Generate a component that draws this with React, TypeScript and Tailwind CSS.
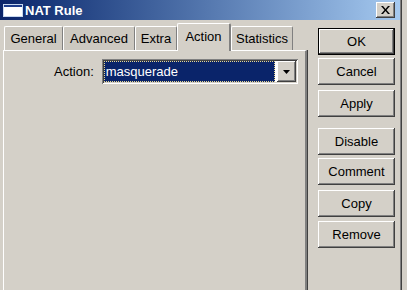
import { ReactNode } from 'react';

// classic 3D bevels
const RAISED =
  'shadow-[inset_-1px_-1px_#404040,inset_1px_1px_#ffffff,inset_-2px_-2px_#808080,inset_2px_2px_#d4d0c8]';
const SUNKEN =
  'shadow-[inset_1px_1px_#808080,inset_-1px_-1px_#ffffff,inset_2px_2px_#404040,inset_-2px_-2px_#d4d0c8]';

const TABS = [
  { name: 'General', w: 'w-[59px]' },
  { name: 'Advanced', w: 'w-[72px]' },
  { name: 'Extra', w: 'w-[42px]' },
  { name: 'Action', w: 'w-[54px]', active: true },
  { name: 'Statistics', w: 'w-[62px]' },
];

function Button({ children, isDefault, className = '' }: { children: ReactNode; isDefault?: boolean; className?: string }) {
  return (
    <div
      className={`h-[27px] w-[77px] flex items-center justify-center text-[13px] text-black ${
        isDefault ? 'border border-black' : ''
      } ${className}`}
    >
      <div className={`w-full h-full flex items-center justify-center ${RAISED}`}>{children}</div>
    </div>
  );
}

export default function App() {
  return (
    <div
      className="w-[407px] h-[290px] overflow-hidden bg-[#d4d0c8] flex text-black"
      style={{ fontFamily: '"Liberation Sans", Arial, sans-serif' }}
    >
      <div className="w-[400px] flex flex-col">
        {/* Title bar */}
        <div className="h-[22px] flex items-center bg-gradient-to-r from-[#0a246a] to-[#a6caf0] pl-[4px] pr-[5px]">
          <div className="w-[18px] h-[11px] bg-white border-t-[2px] border-[#1c3c8c] shadow-[0_0_0_1px_#c8d8f0]" />
          <span className="ml-[3px] text-white font-bold text-[13px] leading-none">NAT Rule</span>
          <div
            className={`ml-auto w-[19px] h-[16px] bg-[#d4d0c8] flex items-center justify-center ${RAISED}`}
          >
            <svg width="9" height="8" viewBox="0 0 9 8">
              <path d="M0 0h2l2.5 3 2.5-3h2L5.5 4 9 8H7L4.5 5 2 8H0l3.5-4z" fill="#000" />
            </svg>
          </div>
        </div>

        <div className="flex pl-[3px] pt-[3px]">
          {/* Left: tabs + panel */}
          <div className="w-[304px] flex flex-col">
            <div className="flex items-end h-[27px] pl-[1px]">
              {TABS.map((t) =>
                t.active ? (
                  <div
                    key={t.name}
                    className={`${t.w} h-[28px] -mb-[1px] relative z-10 bg-[#d4d0c8] border-t border-l border-white border-r-[2px] border-r-[#808080] rounded-t-[2px] flex items-center justify-center text-[13px] pb-[2px]`}
                  >
                    {t.name}
                  </div>
                ) : (
                  <div
                    key={t.name}
                    className={`${t.w} h-[24px] bg-[#cdc9c1] border-t border-l border-white border-r border-r-[#808080] rounded-t-[2px] flex items-center justify-center text-[13px]`}
                  >
                    {t.name}
                  </div>
                )
              )}
            </div>
            <div className="h-[240px] border-t border-l border-white border-r-[2px] border-r-[#808080] shadow-[1px_0_#404040]">
              <div className="flex items-center pt-[8px]">
                <span className="ml-[50px] text-[13px]">Action:</span>
                <div className={`ml-[8px] w-[196px] h-[25px] bg-white flex p-[2px] ${SUNKEN}`}>
                  <div className="flex-1 bg-[#0a246a] outline-1 outline-dotted outline-[#e8d890] -outline-offset-1 text-white text-[13px] leading-[21px] pl-[2px] mr-[2px]">
                    masquerade
                  </div>
                  <div className={`w-[19px] bg-[#d4d0c8] flex items-center justify-center ${RAISED}`}>
                    <svg width="7" height="4" viewBox="0 0 7 4">
                      <path d="M0 0h7L3.5 4z" fill="#000" />
                    </svg>
                  </div>
                </div>
              </div>
            </div>
          </div>

          {/* Right: buttons */}
          <div className="ml-[11px] flex flex-col pt-[5px]">
            <Button isDefault>OK</Button>
            <Button className="mt-[3px]">Cancel</Button>
            <Button className="mt-[5px]">Apply</Button>
            <Button className="mt-[11px]">Disable</Button>
            <Button className="mt-[3px]">Comment</Button>
            <Button className="mt-[5px]">Copy</Button>
            <Button className="mt-[4px]">Remove</Button>
          </div>
        </div>
      </div>
      {/* window edge */}
      <div className="w-[1px] bg-[#808080]" />
      <div className="w-[1px] bg-[#404040]" />
    </div>
  );
}
